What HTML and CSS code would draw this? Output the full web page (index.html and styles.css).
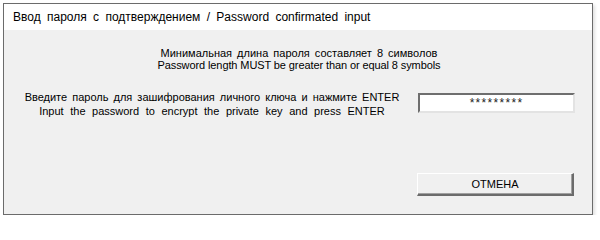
FILE: index.html
```html
<!DOCTYPE html>
<html>
<head>
<meta charset="utf-8">
<link rel="stylesheet" href="styles.css">
</head>
<body>
<div class="window">
  <div class="titlebar">Ввод пароля с подтверждением / Password confirmated input</div>
  <div class="client">
    <div class="notice">
      <div class="ru">Минимальная длина пароля составляет 8 символов</div>
      <div class="en-notice">Password length MUST be greater than or equal 8 symbols</div>
    </div>
    <div class="row">
      <div class="prompt">
        <div class="ru">Введите пароль для зашифрования личного ключа и нажмите ENTER</div>
        <div class="en">Input the password to encrypt the private key and press ENTER</div>
      </div>
      <div class="field">*********</div>
    </div>
    <div class="actions">
      <div class="button">ОТМЕНА</div>
    </div>
  </div>
</div>
</body>
</html>
```
FILE: styles.css
```css
html, body {
  margin: 0;
  padding: 0;
  background: #ffffff;
}
body {
  padding: 3px 0 0 3px;
  font-family: "Liberation Sans", Arial, sans-serif;
  font-size: 11px;
  color: #000;
}
.window {
  width: 588px;
  height: 210px;
  border: 1px solid #6b6b6b;
  display: flex;
  flex-direction: column;
  box-shadow: 2px 2px 3px rgba(0,0,0,0.12);
}
.titlebar {
  height: 26px;
  background: #ffffff;
  font-size: 12px;
  line-height: 27px;
  padding-left: 9px;
  word-spacing: 3px;
}
.client {
  flex: 1;
  background: #f0f0f0;
  display: flex;
  flex-direction: column;
}
.notice {
  margin-top: 17px;
  text-align: center;
  line-height: 12px;
  padding-left: 2px;
}
.ru {
  word-spacing: 2px;
}
.en-notice {
  letter-spacing: -0.1px;
}
.row {
  display: flex;
  align-items: center;
  margin-top: 17px;
}
.prompt {
  width: 412px;
  text-align: center;
  line-height: 14px;
  padding-left: 2px;
  margin-top: 2px;
}
.en {
  word-spacing: 3.5px;
}
.field {
  width: 153px;
  height: 16px;
  background: #fff;
  border-style: solid;
  border-width: 2px;
  border-color: #6e6e6e #e3e3e3 #e3e3e3 #6e6e6e;
  text-align: center;
  line-height: 17px;
  font-size: 12px;
  letter-spacing: 1.3px;
  color: #222;
}
.actions {
  display: flex;
  justify-content: flex-start;
  padding-left: 413px;
  margin-top: 55px;
}
.button {
  width: 154px;
  height: 20px;
  border-style: solid;
  border-width: 1px 2px 2px 1px;
  border-color: #ffffff #6b6b6b #6b6b6b #ffffff;
  background: #f0f0f0;
  text-align: center;
  line-height: 20px;
  box-shadow: inset -1px -1px 0 #a0a0a0;
}
```
